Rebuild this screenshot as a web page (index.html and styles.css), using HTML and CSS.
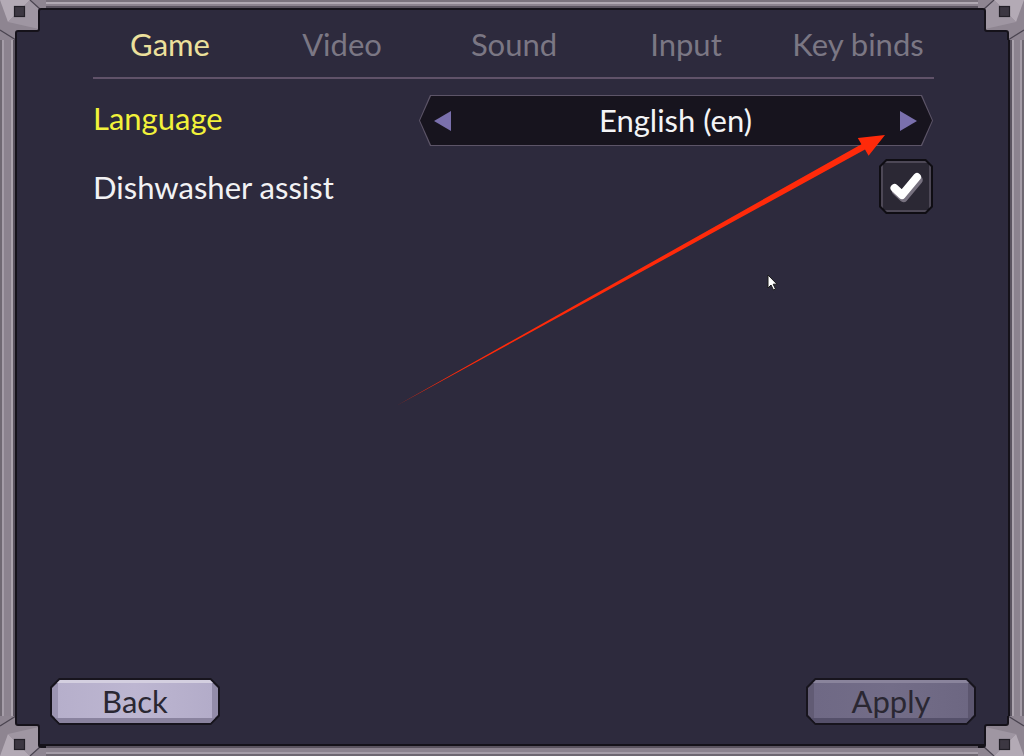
FILE: index.html
```html
<!DOCTYPE html>
<html lang="en">
<head>
<meta charset="utf-8">
<title>Settings</title>
<link rel="stylesheet" href="styles.css">
</head>
<body>
<div class="frame">
  <main class="panel">
    <nav class="tabs">
      <span class="tab active">Game</span>
      <span class="tab">Video</span>
      <span class="tab">Sound</span>
      <span class="tab">Input</span>
      <span class="tab">Key binds</span>
    </nav>
    <div class="divider"></div>
    <section class="settings">
      <div class="row">
        <span class="label highlight">Language</span>
        <div class="selector">
          <div class="selector-inner">
            <span class="arrow left"></span>
            <span class="value">English (en)</span>
            <span class="arrow right"></span>
          </div>
        </div>
      </div>
      <div class="row row-check">
        <span class="label">Dishwasher assist</span>
        <div class="checkbox">
          <div class="checkbox-inner">
            <svg width="36" height="32" viewBox="0 0 36 32">
              <path d="M6.5 18 L14 25 L29 7" fill="none" stroke="#77717f" stroke-width="8.5" stroke-linecap="round" stroke-linejoin="round" transform="translate(1.5,2)"/>
              <path d="M6.5 17 L14 24 L29 6" fill="none" stroke="#ffffff" stroke-width="8" stroke-linecap="round" stroke-linejoin="round"/>
            </svg>
          </div>
        </div>
      </div>
    </section>
    <footer class="footer">
      <div class="btn btn-back"><span class="btn-face">Back</span></div>
      <div class="btn btn-apply"><span class="btn-face">Apply</span></div>
    </footer>
  </main>

  <svg class="corner tl" width="46" height="40" viewBox="0 0 46 40">
    <path d="M0 0 H46 V9 H41 Q39 9 39 11 V29 Q39 31 37 31 H18 Q16 31 16 33 V40 H0 Z" fill="#8e8591"/>
    <path d="M0 0 H30 L8 22 Z" fill="#b3aab5"/>
    <path d="M30 0 L39 9 V29 L8 22 Z" fill="#9f96a2"/>
    <path d="M0 30 L16 40" stroke="#4a4450" stroke-width="1.2"/>
    <path d="M30 0 L40 9" stroke="#4a4450" stroke-width="1.2"/>
    <rect x="14.5" y="6.5" width="10" height="10" fill="#3c3742" stroke="#221f27" stroke-width="1.2"/>
    <path d="M46 9 H41 Q39 9 39 11 V29 Q39 31 37 31 H18 Q16 31 16 33 V40" fill="none" stroke="#15121a" stroke-width="2"/>
  </svg>
  <svg class="corner tr" width="46" height="40" viewBox="0 0 46 40">
    <g transform="translate(46,0) scale(-1,1)">
      <path d="M0 0 H46 V9 H41 Q39 9 39 11 V29 Q39 31 37 31 H18 Q16 31 16 33 V40 H0 Z" fill="#8e8591"/>
      <path d="M0 0 H30 L8 22 Z" fill="#b3aab5"/>
      <path d="M30 0 L39 9 V29 L8 22 Z" fill="#9f96a2"/>
      <path d="M0 30 L16 40" stroke="#4a4450" stroke-width="1.2"/>
      <path d="M30 0 L40 9" stroke="#4a4450" stroke-width="1.2"/>
      <rect x="14.5" y="6.5" width="10" height="10" fill="#3c3742" stroke="#221f27" stroke-width="1.2"/>
      <path d="M46 9 H41 Q39 9 39 11 V29 Q39 31 37 31 H18 Q16 31 16 33 V40" fill="none" stroke="#15121a" stroke-width="2"/>
    </g>
  </svg>
  <svg class="corner bl" width="46" height="40" viewBox="0 0 46 40">
    <g transform="translate(0,40) scale(1,-1)">
      <path d="M0 0 H46 V9 H41 Q39 9 39 11 V29 Q39 31 37 31 H18 Q16 31 16 33 V40 H0 Z" fill="#8e8591"/>
      <path d="M0 0 H30 L8 22 Z" fill="#b3aab5"/>
      <path d="M30 0 L39 9 V29 L8 22 Z" fill="#9f96a2"/>
      <path d="M0 30 L16 40" stroke="#4a4450" stroke-width="1.2"/>
      <path d="M30 0 L40 9" stroke="#4a4450" stroke-width="1.2"/>
      <rect x="14.5" y="6.5" width="10" height="10" fill="#3c3742" stroke="#221f27" stroke-width="1.2"/>
      <path d="M46 9 H41 Q39 9 39 11 V29 Q39 31 37 31 H18 Q16 31 16 33 V40" fill="none" stroke="#15121a" stroke-width="2"/>
    </g>
  </svg>
  <svg class="corner br" width="46" height="40" viewBox="0 0 46 40">
    <g transform="translate(46,40) scale(-1,-1)">
      <path d="M0 0 H46 V9 H41 Q39 9 39 11 V29 Q39 31 37 31 H18 Q16 31 16 33 V40 H0 Z" fill="#8e8591"/>
      <path d="M0 0 H30 L8 22 Z" fill="#b3aab5"/>
      <path d="M30 0 L39 9 V29 L8 22 Z" fill="#9f96a2"/>
      <path d="M0 30 L16 40" stroke="#4a4450" stroke-width="1.2"/>
      <path d="M30 0 L40 9" stroke="#4a4450" stroke-width="1.2"/>
      <rect x="14.5" y="6.5" width="10" height="10" fill="#3c3742" stroke="#221f27" stroke-width="1.2"/>
      <path d="M46 9 H41 Q39 9 39 11 V29 Q39 31 37 31 H18 Q16 31 16 33 V40" fill="none" stroke="#15121a" stroke-width="2"/>
    </g>
  </svg>

  <svg class="annotation" width="1024" height="756" viewBox="0 0 1024 756">
    <polygon points="396,406 861.4,144.2 857.8,138.0 885,135 868.6,155.8 865,149.6" fill="#ff2a0a"/>
  </svg>
  <svg class="cursor" width="12" height="18" viewBox="0 0 12 18">
    <path d="M1 1 V14 L4 11 L6.5 16 L8.5 15 L6.2 10.2 L10 10.2 Z" fill="#ffffff" stroke="#1a1a1a" stroke-width="1"/>
  </svg>
</div>
</body>
</html>
```

FILE: styles.css
```css
* { box-sizing: border-box; }

html, body {
  margin: 0;
  padding: 0;
}

body {
  width: 1024px;
  height: 756px;
  overflow: hidden;
  background: #8c838f;
  font-family: Lato, "Noto Sans", "Liberation Sans", sans-serif;
}

.frame {
  position: relative;
  width: 1024px;
  height: 756px;
  padding: 10px 16px 12px 17px;
  background:
    linear-gradient(90deg, #6f6872 0, #6f6872 2px, #a59da8 2px, #a59da8 4px, #8c838f 4px, #8c838f 11px, #aba3ad 11px, #aba3ad 13px, transparent 13px),
    linear-gradient(270deg, #6f6872 0, #6f6872 2px, #a59da8 2px, #a59da8 4px, #8c838f 4px, #8c838f 10px, #aba3ad 10px, #aba3ad 12px, transparent 12px),
    linear-gradient(180deg, #7a727d 0, #7a727d 2px, #b0a8b2 2px, #b0a8b2 4px, #8c838f 4px, transparent 8px),
    linear-gradient(0deg, #6f6872 0, #6f6872 2px, #a59da8 2px, #a59da8 4px, #8c838f 4px, #8c838f 8px, #aba3ad 8px, #aba3ad 10px, transparent 10px),
    #8c838f;
}

.panel {
  width: 991px;
  height: 734px;
  background: #2d2a3d;
  box-shadow: 0 0 0 2px #15121a, 0 0 0 4px #5b5460;
  border-radius: 3px;
  display: flex;
  flex-direction: column;
  padding: 13px 0 19px 0;
}

.tabs {
  display: grid;
  grid-template-columns: repeat(5, 172px);
  margin-left: 67px;
  height: 42px;
  align-items: center;
}

.tab {
  text-align: center;
  font-size: 31px;
  color: #7b7784;
  line-height: 42px;
}

.tab.active {
  color: #ece09c;
}

.divider {
  height: 2px;
  background: #605269;
  margin: 12px 74px 0 76px;
}

.settings {
  display: flex;
  flex-direction: column;
  padding: 0 75px 0 76px;
}

.row {
  display: flex;
  align-items: center;
  justify-content: space-between;
  margin-top: 16px;
}

.row-check {
  margin-top: 13px;
}

.label {
  font-size: 31px;
  line-height: 40px;
  color: #f2f2f4;
}

.label.highlight {
  color: #f2f23a;
  margin-bottom: 5px;
}

.selector {
  width: 514px;
  height: 51px;
  padding: 1px;
  background: #5d5568;
  clip-path: polygon(11px 0, calc(100% - 11px) 0, 100% 50%, calc(100% - 11px) 100%, 11px 100%, 0 50%);
}

.selector-inner {
  width: 100%;
  height: 100%;
  background: #17141e;
  clip-path: polygon(11px 0, calc(100% - 11px) 0, 100% 50%, calc(100% - 11px) 100%, 11px 100%, 0 50%);
  display: flex;
  align-items: center;
  justify-content: space-between;
  padding: 0 15px 0 14px;
}

.value {
  font-size: 31px;
  color: #f4f4f6;
  line-height: 1;
}

.arrow {
  width: 0;
  height: 0;
  border-top: 10px solid transparent;
  border-bottom: 10px solid transparent;
}

.arrow.left {
  border-right: 17px solid #7a70ad;
}

.arrow.right {
  border-left: 17px solid #7a70ad;
}

.checkbox {
  width: 54px;
  height: 55px;
  padding: 2px;
  background: #0f0d13;
  clip-path: polygon(7px 0, calc(100% - 7px) 0, 100% 7px, 100% calc(100% - 7px), calc(100% - 7px) 100%, 7px 100%, 0 calc(100% - 7px), 0 7px);
}

.checkbox-inner {
  width: 100%;
  height: 100%;
  background: #2b2834;
  border: 2px solid #4d4856;
  clip-path: polygon(6px 0, calc(100% - 6px) 0, 100% 6px, 100% calc(100% - 6px), calc(100% - 6px) 100%, 6px 100%, 0 calc(100% - 6px), 0 6px);
  display: flex;
  align-items: center;
  justify-content: center;
}

.footer {
  margin-top: auto;
  display: flex;
  justify-content: space-between;
  padding: 0 32px 0 33px;
}

.btn {
  width: 170px;
  height: 47px;
  padding: 2px;
  background: #17141d;
  clip-path: polygon(9px 0, calc(100% - 9px) 0, 100% 9px, 100% calc(100% - 9px), calc(100% - 9px) 100%, 9px 100%, 0 calc(100% - 9px), 0 9px);
}

.btn-face {
  display: flex;
  align-items: center;
  justify-content: center;
  width: 100%;
  height: 100%;
  padding-bottom: 2px;
  font-size: 31px;
  color: #2a2732;
  clip-path: polygon(8px 0, calc(100% - 8px) 0, 100% 8px, 100% calc(100% - 8px), calc(100% - 8px) 100%, 8px 100%, 0 calc(100% - 8px), 0 8px);
}

.btn-back .btn-face {
  background:
    linear-gradient(180deg, #d4cfe0 0, #d4cfe0 3px, transparent 3px, transparent calc(100% - 5px), #8a839f calc(100% - 5px)),
    linear-gradient(90deg, #9c95b2 0, #9c95b2 6px, #b6afcb 6px, #bdb6d1 50%, #b3acc9 calc(100% - 6px), #938ca9 calc(100% - 6px));
}

.btn-apply .btn-face {
  background:
    linear-gradient(180deg, #8a849c 0, #8a849c 3px, transparent 3px, transparent calc(100% - 5px), #55506a calc(100% - 5px)),
    linear-gradient(90deg, #615b74 0, #615b74 6px, #6f6985 6px, #736d88 50%, #6d6782 calc(100% - 6px), #5c566f calc(100% - 6px));
}

.corner {
  position: absolute;
}

.corner.tl { left: 0; top: 0; }
.corner.tr { right: 0; top: 0; }
.corner.bl { left: 0; bottom: 0; }
.corner.br { right: 0; bottom: 0; }

.annotation {
  position: absolute;
  left: 0;
  top: 0;
  pointer-events: none;
}

.cursor {
  position: absolute;
  left: 767px;
  top: 274px;
}
```
